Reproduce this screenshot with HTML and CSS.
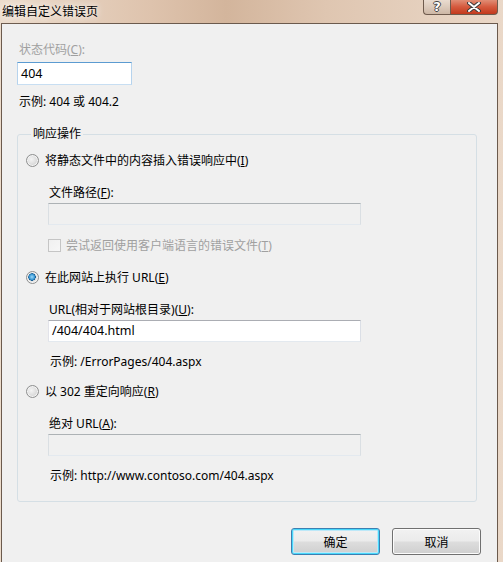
FILE: index.html
```html
<!DOCTYPE html>
<html lang="zh-CN">
<head>
    <meta charset="UTF-8">
    <title>编辑自定义错误页</title>
    <link rel="stylesheet" href="styles.css">
</head>
<body>
    <div class="frame">
        <div class="titlebar">
            <span class="title">编辑自定义错误页</span>
            <div class="caption-btns">
                <span class="cap-btn cap-help">?</span>
                <span class="cap-btn cap-close">
                    <svg width="14" height="10" viewBox="0 0 14 10">
                        <path d="M2 1 L12 9 M12 1 L2 9" stroke="#3c3c3c" stroke-width="4" stroke-linecap="round"/>
                        <path d="M2 1 L12 9 M12 1 L2 9" stroke="#ffffff" stroke-width="2" stroke-linecap="round"/>
                    </svg>
                </span>
            </div>
        </div>
        <div class="client">
            <div class="label disabled">状态代码(<u>C</u>):</div>
            <div class="textbox focused code-box">404</div>
            <div class="label example">示例: 404 或 404.2</div>

            <fieldset class="group">
                <legend>响应操作</legend>

                <div class="option first">
                    <span class="radio"></span>
                    <span>将静态文件中的内容插入错误响应中(<u>I</u>)</span>
                </div>
                <div class="sub">
                    <div class="label sub-label">文件路径(<u>F</u>):</div>
                    <div class="textbox disabled-box wide"></div>
                    <div class="check-row">
                        <span class="checkbox"></span>
                        <span class="disabled">尝试返回使用客户端语言的错误文件(<u>T</u>)</span>
                    </div>
                </div>

                <div class="option">
                    <span class="radio checked"></span>
                    <span>在此网站上执行 URL(<u>E</u>)</span>
                </div>
                <div class="sub">
                    <div class="label sub-label">URL(相对于网站根目录)(<u>U</u>):</div>
                    <div class="textbox wide">/404/404.html</div>
                    <div class="label hint">示例: /ErrorPages/404.aspx</div>
                </div>

                <div class="option last">
                    <span class="radio"></span>
                    <span>以 302 重定向响应(<u>R</u>)</span>
                </div>
                <div class="sub">
                    <div class="label sub-label">绝对 URL(<u>A</u>):</div>
                    <div class="textbox disabled-box wide"></div>
                    <div class="label hint">示例: http://www.contoso.com/404.aspx</div>
                </div>
            </fieldset>

            <div class="buttons">
                <button class="btn btn-default">确定</button>
                <button class="btn">取消</button>
            </div>
        </div>
    </div>
</body>
</html>
```

FILE: styles.css
```css
body {
    margin: 0;
    font-family: "Noto Sans", "Noto Sans CJK SC", sans-serif;
    font-size: 12px;
    color: #000;
    overflow: hidden;
}

.frame {
    width: 503px;
    height: 562px;
    background: linear-gradient(90deg, #ecdccc 0%, #dec3ad 30%, #d3b59c 45%, #dfc6b1 65%, #ead8c8 100%);
    overflow: hidden;
}

.titlebar {
    height: 23px;
    display: flex;
    justify-content: space-between;
    align-items: flex-start;
}

.title {
    margin: 4px 0 0 2px;
    line-height: 16px;
    font-size: 12px;
    color: #000;
    text-shadow: 0 0 6px rgba(255,255,255,0.9), 0 0 10px rgba(255,255,255,0.7);
}

.caption-btns {
    display: flex;
    margin-right: 5px;
}

.cap-btn {
    height: 14px;
    display: flex;
    align-items: center;
    justify-content: center;
    border: 1px solid #6f5b4d;
    border-top: none;
}

.cap-help {
    width: 26px;
    border-radius: 0 0 0 4px;
    border-right: none;
    background: linear-gradient(180deg, #eadcd0 0%, #dccabb 50%, #cdb7a5 100%);
    color: #fff;
    font-family: "DejaVu Sans", sans-serif;
    font-weight: bold;
    font-size: 13px;
    line-height: 14px;
    text-shadow: 1px 0 0 #444, -1px 0 0 #444, 0 1px 0 #444, 0 -1px 0 #444;
}

.cap-close {
    width: 46px;
    border-radius: 0 0 4px 0;
    background: linear-gradient(180deg, #e08d75 0%, #d5593d 50%, #c23a1d 100%);
}

.client {
    width: 497px;
    height: 560px;
    margin-left: 1px;
    background-color: #f0f0f0;
    border: 1px solid #6b5a4d;
    padding: 18px 20px 0 15px;
    box-sizing: border-box;
}

.label {
    line-height: 16px;
    padding-left: 2px;
}

.disabled {
    color: #a0a0a0;
}

.textbox {
    height: 22px;
    box-sizing: border-box;
    border: 1px solid #abadb3;
    border-color: #abadb3 #dbdfe6 #e3e9ef #e2e3ea;
    background-color: #fff;
    padding: 0 3px;
    line-height: 20px;
    font-size: 12.5px;
}

.focused {
    border-color: #5b9bd1 #b6d3ed #c7def2 #b6d3ed;
}

.code-box {
    width: 115px;
    height: 23px;
    margin-top: 4px;
    line-height: 21px;
}

.example {
    margin-top: 9px;
}

.group {
    margin: 16px 0 0 0;
    padding: 0 0 17px 8px;
    border: 1px solid #d5dfe5;
    border-radius: 3px;
    width: 460px;
    box-sizing: border-box;
}

.group legend {
    margin-left: 5px;
    padding: 0 2px;
    line-height: 16px;
}

.option {
    display: flex;
    align-items: center;
    gap: 6px;
    height: 16px;
    margin-top: 16px;
}

.option.first {
    margin-top: 10px;
}

.option.last {
    margin-top: 13px;
}

.sub {
    padding-left: 22px;
}

.sub-label {
    margin-top: 17px;
    padding-left: 1px;
}

.wide {
    width: 313px;
    margin-top: 2px;
}

.disabled-box {
    background-color: #f0f0f0;
    border-color: #adb2b5 #dadfe3 #e3e9ef #dadfe3;
}

.hint {
    margin-top: 12px;
}

.check-row {
    display: flex;
    align-items: center;
    gap: 5px;
    margin-top: 12px;
    height: 16px;
}

.checkbox {
    width: 13px;
    height: 13px;
    box-sizing: border-box;
    border: 1px solid #c5c5c5;
    background: linear-gradient(135deg, #f0f0f0, #f7f7f7);
}

.radio {
    width: 13px;
    height: 13px;
    box-sizing: border-box;
    border-radius: 50%;
    border: 1px solid #8e8f8f;
    background: radial-gradient(circle at 40% 40%, #f4f4f4 0%, #dcdcdc 55%, #c9c9c9 100%);
    box-shadow: inset 0 0 0 1px #f4f4f4;
    flex-shrink: 0;
}

.radio.checked {
    background: radial-gradient(circle at 45% 45%, #9fd8f8 0%, #3d9bd6 30%, #1a5f94 42%, #e0e0e0 46%, #f4f4f4 100%);
}

.buttons {
    display: flex;
    justify-content: flex-end;
    gap: 12px;
    margin-top: 26px;
    margin-right: -4px;
}

.btn {
    width: 89px;
    height: 27px;
    border: 1px solid #707070;
    border-radius: 3px;
    background: linear-gradient(180deg, #f2f2f2 0%, #ebebeb 48%, #dddddd 52%, #cfcfcf 100%);
    box-shadow: inset 0 0 0 1px #fcfcfc;
    font-family: "Noto Sans", "Noto Sans CJK SC", sans-serif;
    font-size: 12px;
    color: #000;
    padding: 0;
}

.btn-default {
    border-color: #3c7fb1;
    box-shadow: inset 0 0 0 1px #48d8fb, inset 0 0 0 2px #bde8f8;
}
```
